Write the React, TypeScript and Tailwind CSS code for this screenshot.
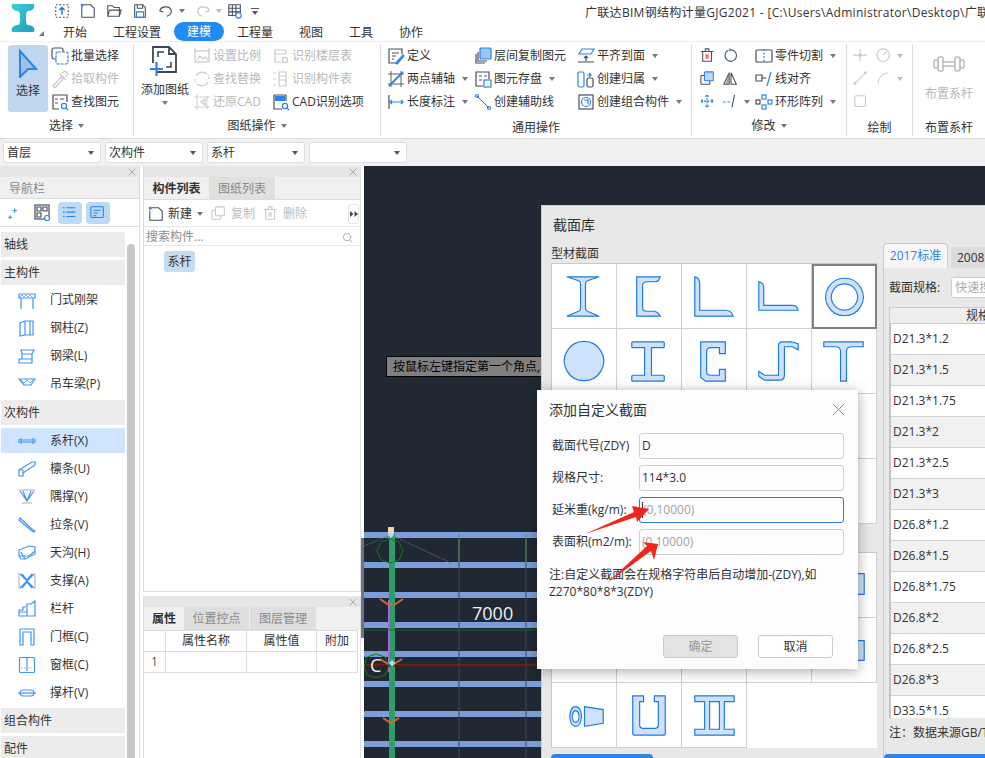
import type { ReactNode } from "react";
import { Search, X } from "lucide-react";

const BLUE = "#2b83ea";
const DARK = "#46505e";
const GRAY = "#c9c9c9";

// shared svg wrapper for the small ribbon icons
const Ico = ({ children, size = 18, box = 18, color = DARK }: { children: ReactNode; size?: number; box?: number; color?: string }) => (
  <svg width={size} height={size} viewBox={`0 0 ${box} ${box}`} fill="none" stroke={color} strokeWidth={1.2} className="shrink-0">
    {children}
  </svg>
);

const Caret = ({ light }: { light?: boolean }) => (
  <span className={`ml-[5px] w-0 h-0 border-x-[3.5px] border-x-transparent border-t-[4px] ${light ? "border-t-[#bbbbbb]" : "border-t-[#777777]"}`} />
);

const Item = ({ icon, label, off, caret, w }: { icon: ReactNode; label: string; off?: boolean; caret?: boolean; w?: string }) => (
  <div className={`flex items-center h-[23px] gap-[2px] whitespace-nowrap ${w ?? ""} ${off ? "text-[#b9b9b9]" : "text-[#333333]"}`}>
    {icon}
    <span>{label}</span>
    {caret && <Caret />}
  </div>
);

const Group = ({ label, caret, low, className, children }: { label: string; caret?: boolean; low?: boolean; className: string; children: ReactNode }) => (
  <div className={`flex flex-col shrink-0 ${className}`}>
    <div className="flex h-[72px] pt-[2px]">{children}</div>
    <div className={`flex items-center justify-center h-[24px] text-[#333333] ${low ? "pt-[4px]" : ""}`}>
      {label}
      {caret && <Caret />}
    </div>
  </div>
);

const Sep = () => <div className="w-px h-[92px] mt-[2px] bg-[#dddddd] shrink-0" />;

const Combo = ({ label }: { label?: string }) => (
  <div className="flex items-center justify-between w-[98px] h-[21px] px-[3px] pr-[6px] bg-white border border-[#dedede] rounded-[3px] text-[#333333]">
    <span>{label}</span>
    <span className="w-0 h-0 border-x-[3px] border-x-transparent border-t-[4px] border-t-[#555555]" />
  </div>
);

const PanelHead = () => (
  <div className="flex items-center justify-end h-[11px] pr-[1px] bg-[#e6e6e6] shrink-0">
    <X size={12} color="#9a9a9a" strokeWidth={1.5} />
  </div>
);

const navIcons: Record<string, ReactNode> = {
  portal: <><path d="M1 3h16v4H1z" /><path d="M3 7v11M15 7v11" /><path d="M2 6l2-2 2 2 2-2 2 2 2-2 2 2" strokeWidth={0.7} /></>,
  column: <><path d="M2 4l5-2h8v14H7l-5 1z" /><path d="M7 2v14M12 2v14" /></>,
  beam: <><path d="M3 3h13l-2 4H4zM4 7v5M14 7v5" /><path d="M1 12h13v4H1z" /></>,
  crane: <><path d="M1 4h16l-4 6H6z" /><path d="M3 5l3 3 3-3 3 3 3-3" strokeWidth={0.8} /></>,
  tie: <><path d="M1 7v4M3 6v6M15 6v6M17 7v4M3 8h12M3 10h12" /></>,
  purlin: <><path d="M1 10l13-8h3v3L5 13v3H1z" /><path d="M1 10h4v3" /></>,
  brace: <><path d="M1 2h16" stroke="#bbbbbb" /><path d="M2 3l7 10 7-10M5 3l4 10 4-10" /><path d="M4 15h10" stroke="#bbbbbb" /></>,
  rod: <><path d="M2 2l13 12 2 1-1 1-2-1L1 4z" /></>,
  gutter: <><path d="M1 6l10-4 6 1v7L7 15H3L1 12z" /><path d="M3 8l4 7M1 12h10l6-5" /></>,
  brace2: <><path d="M2 2l14 14M16 2L2 16M4 2l5 6 5-6M4 16l5-6 5 6" /><path d="M1 1v16M17 1v16" stroke="#bbbbbb" /></>,
  stair: <><path d="M1 16V10h4V7h4V4h4l4-3v15z" /><path d="M1 12h8V8M9 12v4" /></>,
  door: <><path d="M2 17V1h14v16h-3V4H5v13z" /><path d="M12 11h.5" /></>,
  window: <><rect x="1.5" y="1.5" width="15" height="15" rx="1" /><path d="M9 2v13" /><path d="M3 12h12" stroke="#aaaaaa" strokeDasharray="1.5 1.5" /></>,
  strut: <><rect x="2" y="6" width="14" height="6" rx="3" /><path d="M0 9h18" /></>,
};

const NavRow = ({ icon, label, active }: { icon: string; label: string; active?: boolean }) => (
  <div className={`flex items-center shrink-0 ${active ? "h-[25px] mb-[2px] bg-[#cfe5ff]" : "h-[28px]"}`}>
    <span className="ml-[17px] mr-[14px] flex">
      <Ico color="#3f95f5" size={18}>{navIcons[icon]}</Ico>
    </span>
    <span>{label}</span>
  </div>
);

const NavHead = ({ label, mb }: { label: string; mb: string }) => (
  <div className={`flex items-center shrink-0 h-[25px] pl-[3px] pt-[1px] bg-[#ececec] text-[#333333] ${mb}`}>{label}</div>
);

// section shapes, drawn in a 65x65 cell
const shapes: string[] = [
  "M15 13H48L36 17Q34 18 34 20V45Q34 47 36 48L48 53H15L27 48Q29 47 29 45V20Q29 18 27 17Z",
  "M20 13H44L42 17Q41 18 38 18H30Q26 18 26 22V44Q26 48 30 48H38Q42 49 44 53H20Z",
  "M13 13Q18 14 18 20V47H44Q50 47 52 53H13Z",
  "M12 18Q17 19 17 24V42H46Q51 42 52 47H12Z",
  "M32.5 12.5a20 20 0 1 0 .01 0ZM32.5 18.5a14 14 0 1 1 -.01 0Z",
  "M32.5 12.5a20 20 0 1 0 .01 0Z",
  "M16 13H47Q48 13 48 14V18Q48 19 47 19H35V47H47Q48 47 48 48V52Q48 53 47 53H16Q15 53 15 52V48Q15 47 16 47H28V19H16Q15 19 15 18V14Q15 13 16 13Z",
  "M19 13H44V25H38V19H29Q25 19 25 23V43Q25 47 29 47H38V41H44V53H24L19 49Z",
  "M32 17Q32 13 36 13H45L52 15V21L46 18H38V47Q38 52 33 52H18L12 48V43L18 47H32Z",
  "M12 13H52V18H40Q36 18 35 22V53H29V22Q28 18 24 18H12Z",
];

const Shape = ({ d }: { d: string }) => (
  <svg width="64" height="64" viewBox="0 0 65 65">
    <path d={d} fill="#cfe2fb" stroke="#1f7ae0" strokeWidth={1.2} fillRule="evenodd" />
  </svg>
);

const Cell = ({ selected, children }: { selected?: boolean; children?: ReactNode }) => (
  <div className={`flex items-center justify-center bg-white ${selected ? "border-2 border-[#808080]" : "border-r border-b border-[#d0d0d0]"}`}>
    {children}
  </div>
);

const specs = ["D21.3*1.2", "D21.3*1.5", "D21.3*1.75", "D21.3*2", "D21.3*2.5", "D21.3*3", "D26.8*1.2", "D26.8*1.5", "D26.8*1.75", "D26.8*2", "D26.8*2.5", "D26.8*3", "D33.5*1.5"];

const fields = [
  { label: "截面代号(ZDY)", value: "D" },
  { label: "规格尺寸:", value: "114*3.0" },
  { label: "延米重(kg/m):", hint: "(0,10000)", focus: true },
  { label: "表面积(m2/m):", hint: "(0,10000)" },
];

const beams = [535, 565, 595, 625, 654, 684, 714, 744];

const Canvas = () => (
  <svg className="absolute inset-0" width="621" height="592" viewBox="364 166 621 592" fill="none">
    {beams.map((y) => (
      <rect key={y} x="364" y={y - 3} width="621" height="6" fill="#7b9edb" />
    ))}
    <path d="M459 540v218M526 540v218" stroke="#3d4a5e" />
    <path d="M459 534v30M526 534v30" stroke="#5c8f57" />
    <path d="M364 546l27-11 60 28" stroke="#54647e" strokeDasharray="2 1" />
    <rect x="389" y="533" width="6" height="225" fill="#2f9e68" />
    <rect x="388" y="527" width="6" height="7" fill="#f0d2b0" />
    <rect x="388" y="600" width="2" height="72" fill="#b060d8" />
    <path d="M364 630H541" stroke="#0d6e10" />
    <path d="M364 665H541" stroke="#a02020" />
    <path d="M364 666H541" stroke="#5c1616" />
    <path d="M390 539l9 3 4 9-4 9-9 3-9-3-4-9 4-9z" stroke="#0f7a17" />
    <path d="M376 654l9 3 4 9-4 9-9 3-9-3-3-9 3-9z" stroke="#0f7a17" />
    <path d="M380 599l9 6 3-2M403 599l-9 6M380 659l8 5M402 659l-8 5M383 718l8 5 8-5" stroke="#d9682c" strokeWidth={2} />
    <path d="M391 532l-3 3 3 3 3-3zM392 660l-3 3 3 4 3-4z" fill="#9be8f5" />
  </svg>
);

const Arrows = () => (
  <svg className="absolute left-[570px] top-[495px] pointer-events-none" width="100" height="100" viewBox="570 495 100 100">
    <path d="M585 534L634 512L632 506L649 509L637 522L636 517Z" fill="#f0261c" />
    <path d="M607 583L647 546L643 542L658 544L654 560L651 551Z" fill="#f0261c" />
  </svg>
);

export default function App() {
  return (
    <div className="relative w-[985px] h-[758px] overflow-hidden bg-white text-[12px] leading-none text-[#333333] font-['Open_Sans','Noto_Sans_CJK_SC',sans-serif]">
      {/* title bar + tabs */}
      <div className="flex h-[41px]">
        <div className="relative w-[50px] shrink-0">
          <svg className="absolute left-[11px] top-[3px]" width="24" height="30" viewBox="0 0 24 30">
            <defs>
              <linearGradient id="logo" x1="0" y1="0" x2="1" y2="1">
                <stop offset="0" stopColor="#3cd0d8" />
                <stop offset="1" stopColor="#1f9fb8" />
              </linearGradient>
            </defs>
            <path d="M2 1H22Q24 1 23 5Q21 8 17 8Q15 9 15 12V18Q15 21 17 22Q21 22 23 25Q24 29 22 29H2Q0 29 1 25Q3 22 7 22Q9 21 9 18V12Q9 9 7 8Q3 8 1 5Q0 1 2 1Z" fill="url(#logo)" />
          </svg>
          <span className="absolute left-[39px] top-[31px] w-0 h-0 border-l-[5px] border-l-transparent border-b-[5px] border-b-[#777777]" />
        </div>
        <div className="flex flex-col flex-1 min-w-0 overflow-hidden">
          <div className="flex items-center h-[21px] pt-px whitespace-nowrap">
            <div className="flex items-center w-[535px] shrink-0 pl-[4px] gap-[10px]">
              <Ico size={16}><rect x="2" y="2" width="14" height="14" strokeDasharray="2 2" /><path d="M9 13V6M6 8l3-3 3 3" stroke="#1b6fd0" strokeWidth={1.6} /></Ico>
              <Ico size={16}><path d="M4 2h8l4 4v10H2V4" /><path d="M1 1h3v3H1z" fill={BLUE} stroke="none" /></Ico>
              <Ico size={16}><path d="M2 15V3h5l2 2h6v10zM2 15l2-7h13l-2 7" /></Ico>
              <Ico size={16}><path d="M3 2h9l3 3v11H3z" /><path d="M6 2v4h6V2" /><path d="M5 10h8v6H5z" stroke={BLUE} /></Ico>
              <div className="flex items-center"><Ico size={16}><path d="M4 5l-2 4 4 1M2 8c3-5 12-5 13 1 0 3-2 5-5 6" /></Ico><Caret /></div>
              <div className="flex items-center"><Ico size={16} color="#c4c4c4"><path d="M14 5l2 4-4 1M16 8C13 3 4 3 3 9c0 3 2 5 5 6" /></Ico><Caret light /></div>
              <span className="-ml-[5px] flex"><Ico size={16}><path d="M2 2h13v12H2zM2 6h13M2 10h13M6 2v12M10 2v12" /><circle cx="13" cy="14" r="3" fill="#ffffff" stroke={BLUE} /></Ico></span>
              <span className="-ml-[2px] w-[8px] h-[7px] border-t border-[#555555] flex justify-center items-end"><span className="w-0 h-0 border-x-[3px] border-x-transparent border-t-[4px] border-t-[#555555]" /></span>
            </div>
            <span className="pt-[4px] tracking-[0.3px]">广联达BIM钢结构计量GJG2021 - [C:\Users\Administrator\Desktop\广联</span>
          </div>
          <div className="flex items-center h-[20px] pt-px pl-[13px] gap-[26px] whitespace-nowrap">
            <span className="pt-[2px]">开始</span>
            <span className="pt-[2px]">工程设置</span>
            <span className="-mx-[13px] px-[13px] h-[19px] flex items-center rounded-full bg-[#1f8cf5] text-white">建模</span>
            <span className="pt-[2px]">工程量</span>
            <span className="pt-[2px]">视图</span>
            <span className="pt-[2px]">工具</span>
            <span className="pt-[2px]">协作</span>
          </div>
        </div>
      </div>

      {/* ribbon */}
      <div className="flex h-[98px] border-b border-[#dddddd] border-t border-t-[#eeeeee]">
        <Group label="选择" caret className="w-[133px]">
          <div className="flex flex-col items-center ml-[8px] mt-px w-[40px] h-[67px] pt-[3px] bg-[#c0d6ef] rounded-[3px]">
            <svg width="24" height="30" viewBox="0 0 24 30"><path d="M4 3l16 18-8 0-8 8z" fill="#9fc0ea" stroke={BLUE} strokeWidth={2} /></svg>
            <span className="mt-[7px]">选择</span>
          </div>
          <div className="ml-[3px] flex flex-col">
            <Item label="批量选择" icon={<Ico><rect x="1" y="1" width="11" height="11" rx="2" /><rect x="5" y="5" width="12" height="12" rx="2" fill="#ffffff" stroke={BLUE} strokeDasharray="3 1" /></Ico>} />
            <Item off label="拾取构件" icon={<Ico color={GRAY}><path d="M2 16l8-9 2 2-8 9zM9 4l6 6M11 3l3-2 3 3-2 3" /></Ico>} />
            <Item label="查找图元" icon={<Ico><path d="M16 9V2H2v14h6" /><path d="M4 6h3M9 6h4M4 10h3" /><circle cx="13" cy="13" r="2.6" stroke={BLUE} /><path d="M15 15l2 2" stroke={BLUE} /></Ico>} />
          </div>
        </Group>
        <Sep />
        <Group label="图纸操作" caret className="w-[246px]">
          <div className="flex flex-col items-center ml-[6px] w-[50px] pt-[1px]">
            <svg width="32" height="32" viewBox="0 0 32 32" fill="none" stroke="#3c4654" strokeWidth={1.8}>
              <path d="M8 27H27V9L20 2H4v16" />
              <path d="M20 2v7h7" />
              <path d="M9 12V7h6M22 17v5h-5" strokeWidth={1.6} />
              <path d="M1 24h13M7.5 17v14" stroke={BLUE} strokeWidth={2.2} />
            </svg>
            <span className="mt-[7px] whitespace-nowrap">添加图纸</span>
            <span className="mt-[5px] w-0 h-0 border-x-[3px] border-x-transparent border-t-[4px] border-t-[#777777]" />
          </div>
          <div className="ml-[3px] flex flex-col w-[79px]">
            <Item off label="设置比例" icon={<Ico color={GRAY}><rect x="2" y="4" width="14" height="11" /><path d="M2 1v3M16 1v3M4 13l3-4 3 3 2-2 3 3" /></Ico>} />
            <Item off label="查找替换" icon={<Ico color={GRAY}><path d="M3 6a7 7 0 0 1 11-2M15 12a7 7 0 0 1-11 2" /><path d="M2 9a7 7 0 0 0 1 4M16 9a7 7 0 0 0-1-4" strokeDasharray="2 1" /></Ico>} />
            <Item off label="还原CAD" icon={<Ico color={GRAY}><path d="M4 1v16M1 14h16M14 3v13M1 4h16" strokeWidth={0.9} /><path d="M8 9l4-3v6z" /></Ico>} />
          </div>
          <div className="flex flex-col">
            <Item off label="识别楼层表" icon={<Ico color={GRAY}><path d="M14 7V3H3v12h6M3 7h11" /><circle cx="13" cy="13" r="2.6" /></Ico>} />
            <Item off label="识别构件表" icon={<Ico color={GRAY}><path d="M1 3h3M1 9h3M1 15h3M7 2h7v14H7zM7 6h7M7 10h7" /></Ico>} />
            <Item label="CAD识别选项" icon={<Ico><path d="M14 8V2H2v14h8" /><rect x="3" y="3" width="10" height="5" fill={BLUE} stroke="none" /><circle cx="13" cy="13" r="2.6" stroke={BLUE} /><path d="M15 15l2 2" stroke={BLUE} /></Ico>} />
          </div>
        </Group>
        <Sep />
        <Group label="通用操作" low className="w-[310px]">
          <div className="ml-[6px] flex flex-col w-[87px]">
            <Item label="定义" icon={<Ico><path d="M15 7V2H2v14h8" /><path d="M5 6h7M5 9h4M5 12h2" /><path d="M9 16l7-8 1 1-7 8z" stroke={BLUE} /></Ico>} />
            <Item label="两点辅轴" caret icon={<Ico><path d="M4 1v16M14 1v16M1 4h16M1 14h16" strokeWidth={0.9} /><path d="M2 16L16 2" stroke={BLUE} strokeWidth={1.8} /></Ico>} />
            <Item label="长度标注" caret icon={<Ico><path d="M2 2v14" /><path d="M3 9h13M14 7l2 2-2 2M5 7L3 9l2 2" stroke={BLUE} /></Ico>} />
          </div>
          <div className="flex flex-col w-[103px]">
            <Item label="层间复制图元" icon={<Ico><path d="M2 7v9h9M4 5v9h9" /><rect x="6" y="1" width="11" height="11" rx="1" fill="#9fc6f3" stroke={BLUE} /></Ico>} />
            <Item label="图元存盘" caret icon={<Ico><path d="M15 9V2H2v14h7" /><path d="M5 6h3M10 6h3M5 10h3" /><rect x="10" y="10" width="7" height="7" stroke={BLUE} /></Ico>} />
            <Item label="创建辅助线" icon={<Ico><path d="M3 3l12 12" strokeWidth={0.9} /><circle cx="3" cy="3" r="1.5" stroke={BLUE} /><circle cx="15" cy="15" r="1.5" stroke={BLUE} /></Ico>} />
          </div>
          <div className="flex flex-col">
            <Item label="平齐到面" caret icon={<Ico><path d="M5 2h12l-3 5H2z" stroke={BLUE} /><path d="M1 15h16M9 14V9M7 11l2-2 2 2" /></Ico>} />
            <Item label="创建归属" caret icon={<Ico><rect x="1" y="2" width="6" height="15" rx="1.5" stroke={BLUE} /><rect x="10" y="8" width="6" height="9" rx="1.5" /><path d="M10 5h4M12 3l2 2-2 2" stroke={BLUE} /></Ico>} />
            <Item label="创建组合构件" caret icon={<Ico><rect x="2" y="2" width="14" height="14" /><circle cx="9" cy="9" r="4.5" stroke={BLUE} /><path d="M7 7h4v4" stroke={BLUE} /></Ico>} />
          </div>
        </Group>
        <Sep />
        <Group label="修改" caret className="w-[154px]">
          <div className="ml-[8px] grid grid-cols-[23px_32px] auto-rows-[23px] items-center w-[55px]">
            <Ico size={16}><path d="M1 4h14M6 4V1h4v3M3 4v11h10V4" /><path d="M7 7v5M9 7v5" stroke="#e03030" /></Ico>
            <Ico size={16}><path d="M9 2a6.5 6.5 0 1 1-3 .6" /><path d="M7 0l3 2-3 2z" fill={BLUE} stroke="none" /></Ico>
            <Ico size={16}><rect x="1" y="5" width="10" height="10" rx="1" /><rect x="5" y="1" width="10" height="10" rx="1" fill="#bcd8f7" stroke={BLUE} /></Ico>
            <Ico size={16}><path d="M7 2L1 15h6zM9 2l6 13H9z" /><path d="M7 2L3 15h4z" fill="#999999" stroke="none" /></Ico>
            <Ico size={16} color={BLUE}><path d="M8 1v14M1 8h14M6 3l2-2 2 2M6 13l2 2 2-2M3 6L1 8l2 2M13 6l2 2-2 2" strokeDasharray="2.5 1" /></Ico>
            <div className="flex items-center"><Ico size={16}><path d="M0 9h3M5 9h3" stroke={BLUE} /><path d="M13 1l-3 14" /></Ico><Caret /></div>
          </div>
          <div className="flex flex-col">
            <Item label="零件切割" caret icon={<Ico><rect x="1" y="3" width="16" height="12" rx="1" /><path d="M9 2v14" stroke={BLUE} strokeDasharray="2 1.5" /></Ico>} />
            <Item label="线对齐" icon={<Ico><path d="M1 5h6v6H1z" /><path d="M7 8h4" /><path d="M16 2l-4 14" stroke={BLUE} /></Ico>} />
            <Item label="环形阵列" caret icon={<Ico><rect x="1" y="7" width="4" height="4" /><rect x="7" y="2" width="4" height="4" stroke={BLUE} /><rect x="7" y="12" width="4" height="4" stroke={BLUE} /><rect x="13" y="7" width="4" height="4" stroke={BLUE} /></Ico>} />
          </div>
        </Group>
        <Sep />
        <Group label="绘制" low className="w-[65px]">
          <div className="ml-[6px] grid grid-cols-[23px_32px] auto-rows-[23px] items-center">
            <Ico size={16} color={GRAY}><path d="M0 8h6M10 8h6M8 1v5M8 10v5" /><circle cx="8" cy="8" r="1.5" fill={GRAY} /></Ico>
            <div className="flex items-center"><Ico size={16} color={GRAY}><circle cx="8" cy="8" r="7" /><path d="M8 8l4-4" /></Ico><Caret light /></div>
            <Ico size={16} color={GRAY}><path d="M2 14L14 2" /><circle cx="2" cy="14" r="1" /><circle cx="14" cy="2" r="1" /></Ico>
            <div className="flex items-center"><Ico size={16} color={GRAY}><path d="M2 15C3 6 7 3 14 2" /></Ico><Caret light /></div>
            <Ico size={16} color={GRAY}><rect x="2" y="2" width="12" height="12" rx="1.5" /></Ico>
          </div>
        </Group>
        <Sep />
        <Group label="布置系杆" low className="w-[72px]">
          <div className="flex flex-col items-center w-[72px] pt-[12px] text-[#b9b9b9]">
            <svg width="32" height="16" viewBox="0 0 32 16" fill="none" stroke="#bdbdbd" strokeWidth={1.6}>
              <rect x="1" y="4" width="4" height="8" rx="1.5" />
              <rect x="5" y="1" width="5" height="14" rx="2" />
              <rect x="22" y="1" width="5" height="14" rx="2" />
              <rect x="27" y="4" width="4" height="8" rx="1.5" />
              <path d="M10 6h12M10 10h12" />
            </svg>
            <span className="mt-[16px] whitespace-nowrap">布置系杆</span>
          </div>
        </Group>
      </div>

      {/* combo row */}
      <div className="flex items-center h-[27px] pl-[3px] gap-[4px] bg-[#f0f0f0]">
        <Combo label="首层" />
        <Combo label="次构件" />
        <Combo label="系杆" />
        <Combo />
      </div>

      {/* workspace */}
      <div className="flex h-[592px]">
        {/* nav panel */}
        <div className="flex flex-col w-[140px] shrink-0 border-r border-[#dddddd]">
          <PanelHead />
          <div className="flex items-center h-[22px] pl-[9px] pt-[2px] bg-[#f0f0f0] text-[#8a8a8a] border-b border-[#dddddd]">导航栏</div>
          <div className="flex items-center h-[28px] pl-[7px] border-b border-[#dddddd] shrink-0">
            <span className="w-[18px] flex"><Ico size={14} color={BLUE}><path d="M10 3v6M7 6h6M4 12v5M1.500 14.500h5" /></Ico></span>
            <span className="ml-[9px] w-[20px] flex"><Ico size={18}><rect x="1" y="1" width="14" height="14" /><path d="M3 3h4v4H3zM9 3h4v4H9zM3 9h4v4H3z" /><circle cx="13" cy="14" r="2.500" fill="#ffffff" stroke={BLUE} /></Ico></span>
            <span className="ml-[4px] flex items-center justify-center w-[24px] h-[22px] rounded-[4px] bg-[#bcd9f5]"><Ico size={16} color={BLUE}><path d="M5 3h10M5 8h10M5 13h10M1 3h2M1 8h2M1 13h2" /></Ico></span>
            <span className="ml-[4px] flex items-center justify-center w-[24px] h-[22px] rounded-[4px] bg-[#bcd9f5]"><Ico size={16} color={BLUE}><rect x="1" y="2" width="14" height="12" rx="1" /><path d="M4 6h8M4 9h5M4 12h3" /></Ico></span>
          </div>
          <div className="flex flex-1 min-h-0 overflow-hidden">
            <div className="w-[124px] shrink-0 ml-px pt-[5px] flex flex-col">
              <NavHead label="轴线" mb="mb-[3px]" />
              <NavHead label="主构件" mb="mb-px" />
              <NavRow icon="portal" label="门式刚架" />
              <NavRow icon="column" label="钢柱(Z)" />
              <NavRow icon="beam" label="钢梁(L)" />
              <NavRow icon="crane" label="吊车梁(P)" />
              <div className="h-[2px] shrink-0" />
              <NavHead label="次构件" mb="mb-[3px]" />
              <NavRow icon="tie" label="系杆(X)" active />
              <NavRow icon="purlin" label="檩条(U)" />
              <NavRow icon="brace" label="隅撑(Y)" />
              <NavRow icon="rod" label="拉条(V)" />
              <NavRow icon="gutter" label="天沟(H)" />
              <NavRow icon="brace2" label="支撑(A)" />
              <NavRow icon="stair" label="栏杆" />
              <NavRow icon="door" label="门框(C)" />
              <NavRow icon="window" label="窗框(C)" />
              <NavRow icon="strut" label="撑杆(V)" />
              <div className="h-[1px] shrink-0" />
              <NavHead label="组合构件" mb="mb-[3px]" />
              <NavHead label="配件" mb="" />
            </div>
            <div className="ml-[2px] mt-[17px] w-[8px] flex-1 max-w-[8px] rounded-t-[4px] bg-[#c8c8c8]" />
          </div>
        </div>

        <div className="w-[3px] shrink-0" />

        {/* list + properties */}
        <div className="flex flex-col w-[218px] shrink-0">
          <div className="flex flex-col h-[426px] border-x border-b border-[#dddddd]">
            <PanelHead />
            <div className="flex h-[23px] bg-[#f0f0f0] border-b border-[#dddddd]">
              <span className="flex items-center justify-center w-[65px] pt-[2px] font-semibold">构件列表</span>
              <span className="flex items-center justify-center w-[66px] pt-[2px] bg-[#e0e0e0] text-[#8a8a8a]">图纸列表</span>
            </div>
            <div className="flex items-center h-[27px] pl-[4px] pt-[2px] border-b border-[#e6e6e6]">
              <Ico size={16}><path d="M4 2h8l4 4v10H2V5" /><path d="M1 1h3v3H1z" fill={BLUE} stroke="none" /></Ico>
              <span className="ml-[4px]">新建</span>
              <Caret />
              <span className="ml-[8px] flex items-center gap-[4px] text-[#bdbdbd]"><Ico size={16} color={GRAY}><rect x="1" y="5" width="10" height="10" rx="1" /><rect x="5" y="1" width="10" height="10" rx="1" fill="#ffffff" /></Ico>复制</span>
              <span className="ml-[8px] flex items-center gap-[4px] text-[#bdbdbd]"><Ico size={16} color={GRAY}><path d="M1 4h14M6 4V1h4v3M3 4v11h10V4M7 7v5M9 7v5" /></Ico>删除</span>
              <span className="ml-auto mr-[1px] flex items-center justify-center w-[11px] h-[20px] border border-[#e4e4e4] rounded-[3px]">
                <svg width="8" height="6" viewBox="0 0 8 6" fill="#444444"><path d="M0 0l3.500 3L0 6zM4.500 0L8 3 4.500 6z" /></svg>
              </span>
            </div>
            <div className="flex items-center justify-between h-[19px] pl-[2px] pr-[7px] pt-[2px] border-b border-[#e6e6e6] text-[#8c8c8c]">
              搜索构件...
              <Search size={11} color="#aaaaaa" />
            </div>
            <div className="pl-[20px] pt-[5px]">
              <span className="inline-flex items-center justify-center w-[31px] h-[21px] rounded-[3px] bg-[#c5dcf3]">系杆</span>
            </div>
          </div>
          <div className="h-[4px]" />
          <div className="flex flex-col flex-1 border-x border-[#dddddd]">
            <PanelHead />
            <div className="flex h-[23px] bg-[#f0f0f0]">
              <span className="flex items-center justify-center w-[40px] pt-px font-semibold">属性</span>
              <span className="flex items-center justify-center w-[65px] pt-px bg-[#dedede] text-[#8a8a8a]">位置控点</span>
              <span className="flex items-center justify-center w-[66px] ml-px pt-px bg-[#dedede] text-[#8a8a8a]">图层管理</span>
            </div>
            <div className="grid grid-cols-[22px_81px_70px_41px] auto-rows-[21px] w-[214px] border-b border-r border-[#dddddd]">
              {["", "属性名称", "属性值", "附加", "1", "", "", ""].map((t, i) => (
                <div key={i} className={`flex items-center justify-center border-r border-t border-[#dddddd] last:border-r-0 ${i === 4 ? "text-[#555555]" : ""}`}>{t}</div>
              ))}
            </div>
          </div>
        </div>

        {/* splitter */}
        <div className="w-[3px] shrink-0 flex flex-col">
          <div className="mt-[372px] h-[100px] bg-[#6b7480]" />
        </div>

        {/* drawing canvas */}
        <div className="relative flex-1 bg-[#202833] overflow-hidden">
          <Canvas />
          <span className="absolute left-[108px] top-[438px] text-[18px] text-[#f0f0f0]">7000</span>
          <span className="absolute left-[6px] top-[490px] text-[18px] text-[#f0f0f0]">C</span>
          <div className="absolute left-[22px] top-[190px] flex items-center w-[160px] h-[21px] pl-[6px] bg-[#808080] border border-black text-black whitespace-nowrap overflow-hidden">
            按鼠标左键指定第一个角点,
          </div>

          {/* section library window */}
          <div className="absolute left-[177px] top-[39px] flex w-[450px] h-[560px] bg-[#e8e8e8] border-l border-t border-[#cccccc]">
            <div className="flex flex-col w-[341px] shrink-0 pl-[9px]">
              <div className="h-[38px] flex items-center pl-[2px] text-[14px]">截面库</div>
              <div className="h-[19px] flex items-center">型材截面</div>
              <div className="grid grid-cols-[repeat(5,65px)] auto-rows-[65px] w-[326px] border-l border-t border-[#c8c8c8] bg-white">
                {shapes.map((d, i) => (
                  <Cell key={i} selected={i === 4}><Shape d={d} /></Cell>
                ))}
                {Array.from({ length: 10 }).map((_, i) => <Cell key={i} />)}
              </div>
              <div className="mt-[28px] grid grid-cols-[repeat(5,65px)] auto-rows-[65px] w-[326px] border-l border-t border-[#c8c8c8] bg-white">
                {Array.from({ length: 4 }).map((_, i) => <Cell key={i} />)}
                <Cell><Shape d="M12 21H53V42H12Z" /></Cell>
                {Array.from({ length: 4 }).map((_, i) => <Cell key={i} />)}
                <Cell><Shape d="M12 23H53V43H12Z" /></Cell>
                <Cell>
                  <Shape d="M24 24a6 10 0 1 0 .01 0ZM24 28a3.500 6 0 1 1 -.01 0ZM33 24L52 27V41L33 44Z" />
                </Cell>
                <Cell>
                  <Shape d="M16 13H27V19H23V43Q23 46 26 46H39Q42 46 42 43V19H38V13H49V51Q49 53 47 53H18Q16 53 16 51Z" />
                </Cell>
                <Cell>
                  <Shape d="M13 13H53V19H43V47H53V53H13V47H23V19H13ZM28 19V47H38V19Z" />
                </Cell>
              </div>
              <div className="mt-[6px] w-[102px] h-[8px] rounded-t-[4px] bg-[#2b84e6]" />
            </div>
            <div className="flex flex-col flex-1 min-w-0">
              <div className="flex items-end h-[62px] shrink-0">
                <span className="flex items-center justify-center w-[65px] h-[25px] bg-[#f6f6f6] border border-b-0 border-[#cccccc] rounded-t-[4px] text-[#2b83ea]">2017标准</span>
                <span className="flex items-center pl-[6px] ml-[3px] flex-1 h-[21px] bg-[#dcdcdc] rounded-t-[4px]">2008</span>
              </div>
              <div className="flex flex-col flex-1 min-h-0 border-l border-[#cccccc] pl-[5px]">
                <div className="flex items-center h-[39px] shrink-0 whitespace-nowrap overflow-hidden">
                  截面规格:
                  <span className="flex items-center ml-[11px] pl-[3px] w-[60px] h-[21px] shrink-0 bg-white border border-[#cfcfcf] rounded-[3px] text-[#aaaaaa]">快速搜索</span>
                </div>
                <div className="flex items-center justify-end h-[17px] shrink-0 bg-[#ededed] border border-[#cccccc] border-r-0 overflow-hidden">
                  <span className="mr-[1px]">规格</span>
                </div>
                <div className="h-[394px] shrink-0 overflow-hidden border-l-2 border-[#c4c4c4]">
                  {specs.map((s, i) => (
                    <div key={s} className={`flex items-center h-[31px] pl-[2px] border-b border-[#d4d4d4] ${i % 2 ? "bg-[#f1f1f1]" : "bg-white"}`}>{s}</div>
                  ))}
                </div>
                <div className="flex items-center h-[29px] shrink-0 whitespace-nowrap overflow-hidden">注：数据来源GB/T</div>
                <div className="mt-[7px] -ml-[5px] h-[8px] rounded-t-[4px] bg-[#2b84e6]" />
              </div>
            </div>
          </div>

          {/* custom section dialog */}
          <div className="absolute left-[173px] top-[224px] flex flex-col w-[321px] h-[279px] bg-[#fdfdff] shadow-[0_2px_12px_rgba(0,0,0,0.35)]">
            <div className="flex items-center justify-between h-[38px] pl-[12px] pr-[9px] pt-[1px] text-[14px]">
              添加自定义截面
              <X size={21} color="#8a8a8a" strokeWidth={1.1} />
            </div>
            <div className="flex flex-col gap-[6px] pl-[15px] pt-[5px]">
              {fields.map((f) => (
                <div key={f.label} className="flex items-center h-[26px]">
                  <span className="w-[87px] shrink-0 whitespace-nowrap">{f.label}</span>
                  <div className={`flex items-center w-[205px] h-[26px] pl-[2px] rounded-[3px] border ${f.focus ? "border-[#2b7cd8]" : "border-[#cfcfcf]"}`}>
                    {f.focus && <span className="w-px h-[16px] bg-[#333333]" />}
                    {f.value ? <span>{f.value}</span> : <span className="text-[#a3a3a3]">{f.hint}</span>}
                  </div>
                </div>
              ))}
            </div>
            <div className="pl-[12px] pt-[11px] leading-[17px] w-[312px]">
              注:自定义截面会在规格字符串后自动增加-(ZDY),如
              <br />
              Z270*80*8*3(ZDY)
            </div>
            <div className="flex justify-end gap-[20px] mt-auto mb-[11px] pr-[25px]">
              <span className="flex items-center justify-center w-[75px] h-[23px] rounded-[3px] bg-[#e3e3e3] border border-[#c8ccd2] text-[#999999]">确定</span>
              <span className="flex items-center justify-center w-[75px] h-[23px] rounded-[3px] bg-white border border-[#cccccc]">取消</span>
            </div>
          </div>
        </div>
      </div>

      <Arrows />
    </div>
  );
}
